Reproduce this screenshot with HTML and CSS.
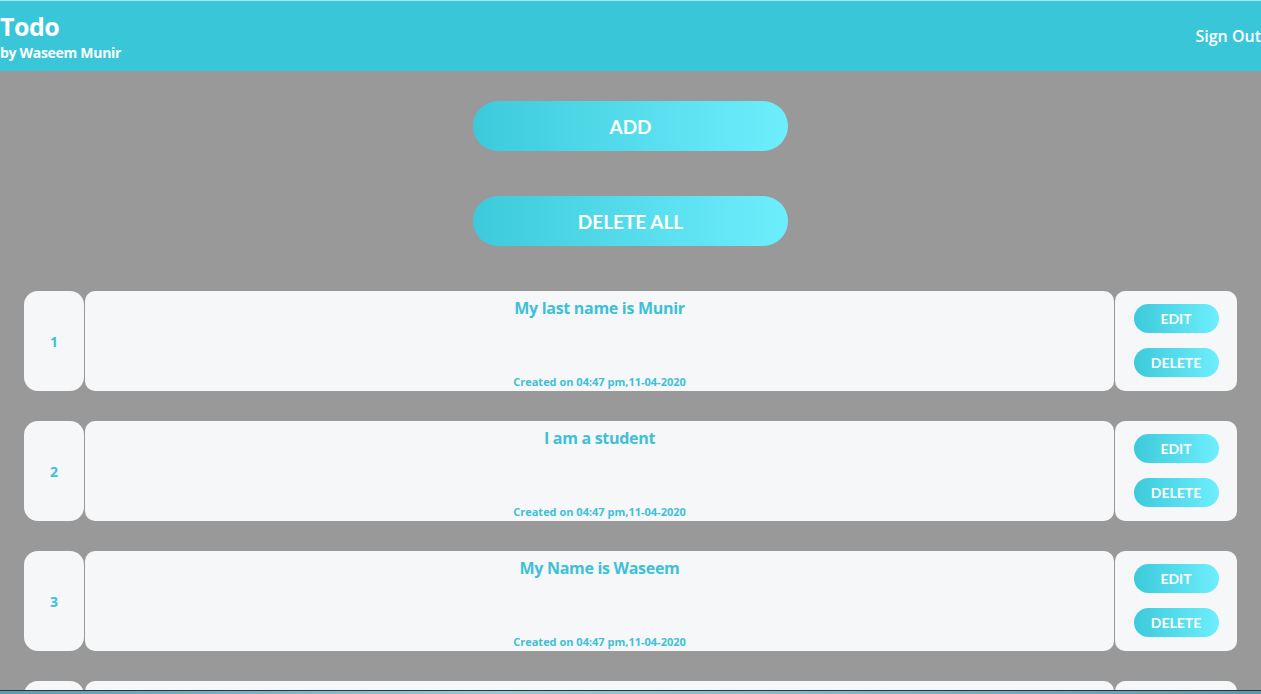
FILE: index.html
```html
<!DOCTYPE html>
<html>
<head>
<meta charset="utf-8">
<link rel="stylesheet" href="styles.css">
</head>
<body>
<header class="topbar">
  <div class="brand">
    <div class="brand-title">Todo</div>
    <div class="brand-sub">by Waseem Munir</div>
  </div>
  <div class="signout">Sign Out</div>
</header>
<main class="main">
  <div class="actions">
    <button class="pill big">ADD</button>
    <button class="pill big">DELETE ALL</button>
  </div>
  <ul class="list">
    <li class="row">
      <div class="num">1</div>
      <div class="body">
        <div class="title">My last name is Munir</div>
        <div class="created">Created on 04:47 pm,11-04-2020</div>
      </div>
      <div class="ctrls">
        <button class="pill small">EDIT</button>
        <button class="pill small">DELETE</button>
      </div>
    </li>
    <li class="row">
      <div class="num">2</div>
      <div class="body">
        <div class="title">I am a student</div>
        <div class="created">Created on 04:47 pm,11-04-2020</div>
      </div>
      <div class="ctrls">
        <button class="pill small">EDIT</button>
        <button class="pill small">DELETE</button>
      </div>
    </li>
    <li class="row">
      <div class="num">3</div>
      <div class="body">
        <div class="title">My Name is Waseem</div>
        <div class="created">Created on 04:47 pm,11-04-2020</div>
      </div>
      <div class="ctrls">
        <button class="pill small">EDIT</button>
        <button class="pill small">DELETE</button>
      </div>
    </li>
    <li class="row">
      <div class="num">4</div>
      <div class="body">
        <div class="title">Hello</div>
        <div class="created">Created on 04:47 pm,11-04-2020</div>
      </div>
      <div class="ctrls">
        <button class="pill small">EDIT</button>
        <button class="pill small">DELETE</button>
      </div>
    </li>
  </ul>
</main>
<div class="taskbar"></div>
</body>
</html>
```
FILE: styles.css
```css
* { box-sizing: border-box; }
html, body { margin: 0; padding: 0; }
body {
  background: #999999;
  font-family: "Open Sans", "Noto Sans", sans-serif;
}
.topbar {
  height: 71px;
  background: #38c6d8;
  border-top: 1px solid #a8e4ec;
  display: flex;
  justify-content: space-between;
  align-items: center;
  color: #fff;
}
.brand { display: flex; flex-direction: column; padding-bottom: 0; }
.brand-title {
  font-size: 25px;
  font-weight: 700;
  line-height: 30px;
  letter-spacing: -0.5px;
}
.brand-sub {
  font-size: 14px;
  font-weight: 700;
  line-height: 19px;
  letter-spacing: -0.3px;
  margin-top: 2px;
}
.signout {
  font-size: 16px;
  font-weight: 600;
  letter-spacing: 0;
}
.main { padding: 30px 24px 40px; }
.actions {
  display: flex;
  flex-direction: column;
  align-items: center;
  gap: 45px;
  margin-bottom: 45px;
}
.pill {
  border: none;
  color: #fff;
  background: linear-gradient(90deg, #3ccadb 0%, #6eeefd 100%);
  font-family: "Lato", "Open Sans", sans-serif;
  font-weight: 700;
  padding: 0;
  cursor: pointer;
}
.pill.big {
  width: 315px;
  height: 50px;
  border-radius: 25px;
  font-size: 19px;
}
.pill.small {
  width: 85px;
  height: 29px;
  border-radius: 15px;
  font-size: 14px;
}
.list {
  list-style: none;
  margin: 0;
  padding: 0;
  display: flex;
  flex-direction: column;
  gap: 30px;
}
.row {
  display: flex;
  gap: 1px;
  height: 100px;
}
.num {
  width: 60px;
  background: #f5f7f9;
  border-radius: 14px;
  display: flex;
  align-items: center;
  justify-content: center;
  color: #3fc0d6;
  font-weight: 700;
  font-size: 14px;
  padding-top: 1px;
}
.body {
  flex: 1;
  background: #f5f7f9;
  border-radius: 10px;
  display: flex;
  flex-direction: column;
  justify-content: space-between;
  align-items: center;
  color: #3fc0d6;
  padding: 5px 0 2px;
}
.title {
  font-size: 16px;
  font-weight: 700;
  letter-spacing: -0.3px;
  line-height: 24px;
}
.created {
  font-size: 11px;
  font-weight: 700;
  letter-spacing: 0;
  line-height: 14px;
}
.ctrls {
  width: 122px;
  background: #f5f7f9;
  border-radius: 10px;
  display: flex;
  flex-direction: column;
  align-items: center;
  justify-content: center;
  gap: 15px;
  padding-bottom: 1px;
}
.taskbar {
  position: fixed;
  left: 0;
  right: 0;
  bottom: 0;
  height: 4px;
  background: linear-gradient(90deg, #5c9bb0, #9cc8d6 40%, #7fb3c4 70%, #5f98ab);
  border-top: 1px solid #1e3a46;
}
```
